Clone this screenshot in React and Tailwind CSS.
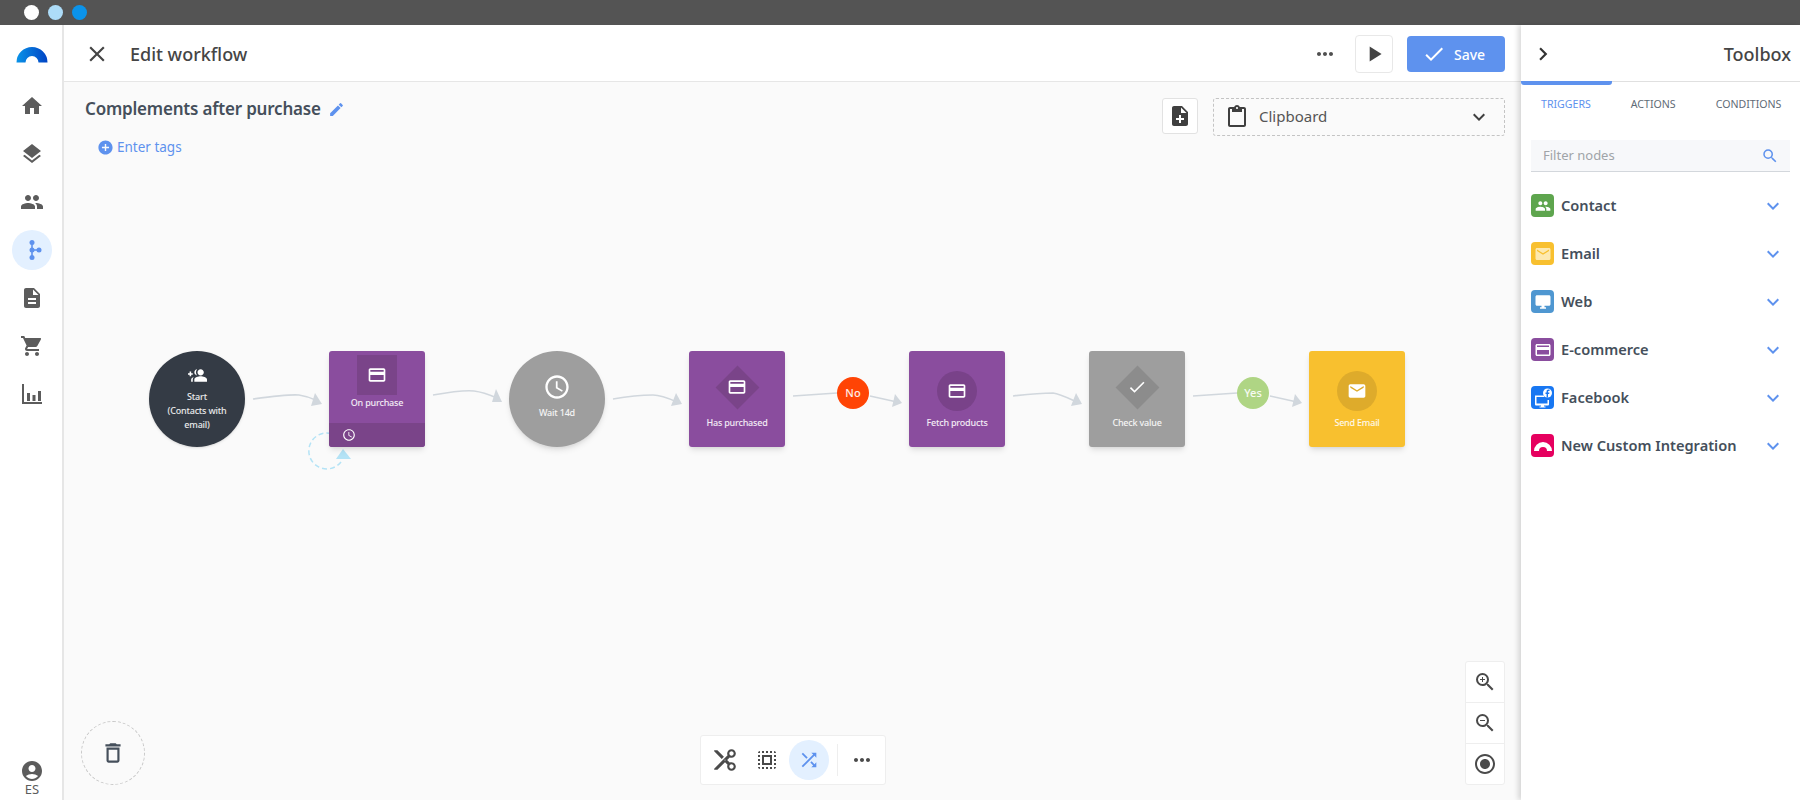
import React from "react";
import {
  MdHome, MdLayers, MdPeople, MdDescription, MdShoppingCart, MdAccountCircle, MdClose, MdPlayArrow,
  MdMoreHoriz, MdNoteAdd, MdContentPaste, MdExpandMore, MdChevronRight, MdSearch, MdCreditCard,
  MdEmail, MdDesktopWindows, MdAddCircle, MdEdit, MdGroupAdd, MdAccessTime, MdDeleteOutline,
  MdZoomIn, MdZoomOut, MdRadioButtonChecked, MdShuffle, MdContentCut, MdSelectAll, MdCheck,
} from "react-icons/md";

const Logo = () => (
  <svg width="32" height="17" viewBox="0 0 32 17">
    <defs>
      <linearGradient id="logoGrad" x1="0" y1="0" x2="1" y2="0">
        <stop offset="0" stopColor="#0a93e8" />
        <stop offset="1" stopColor="#0043c4" />
      </linearGradient>
    </defs>
    <path d="M0.5 16.5a15.5 15.5 0 0 1 31 0h-9a6.5 6.5 0 0 0-13 0z" fill="url(#logoGrad)" />
  </svg>
);

const FlowIcon = () => (
  <svg width="24" height="24" viewBox="0 0 24 24" fill="#5e92ee" stroke="#5e92ee">
    <path d="M12 4v16M12 12h8" strokeWidth="1.6" fill="none" />
    <circle cx="12" cy="4.5" r="2.5" stroke="none" />
    <circle cx="12" cy="12" r="2.5" stroke="none" />
    <circle cx="19" cy="12" r="2.5" stroke="none" />
    <circle cx="12" cy="19.5" r="2.5" stroke="none" />
  </svg>
);

const ChartIcon = () => (
  <svg width="24" height="24" viewBox="0 0 24 24" fill="#5c5c5c">
    <path d="M2 2h2v18h18v2H2z" />
    <path d="M7 11h3v8H7zM12.5 13h3v6h-3zM18 9h3v10h-3z" />
  </svg>
);

const sideItems = [MdHome, MdLayers, MdPeople];
const sideItemsBelow = [MdDescription, MdShoppingCart];

const Sidebar = () => (
  <aside className="w-[64px] shrink-0 flex flex-col items-center pl-[2px] border-r-2 border-[#e6e6e6] bg-white">
    <div className="mt-[21px] mb-[31px] h-[17px] flex"><Logo /></div>
    <div className="flex flex-col items-center gap-[24px] text-[#5c5c5c]">
      {sideItems.map((Icon, i) => (
        <Icon key={i} size={24} />
      ))}
    </div>
    <div className="mt-[16px] w-10 h-10 rounded-full bg-[#e3f0ff] flex items-center justify-center">
      <FlowIcon />
    </div>
    <div className="mt-[16px] flex flex-col items-center gap-[24px] text-[#5c5c5c]">
      {sideItemsBelow.map((Icon, i) => (
        <Icon key={i} size={24} />
      ))}
      <ChartIcon />
    </div>
    <div className="mt-auto mb-[4px] flex flex-col items-center text-[#5c5c5c]">
      <MdAccountCircle size={24} />
      <span className="text-[13px] leading-[14px] -mt-[1px]">ES</span>
    </div>
  </aside>
);

const Header = () => (
  <header className="h-[57px] shrink-0 bg-white border-b border-[#e6e6e6] flex items-center pt-[2px] pl-[20px] pr-[16px]">
    <MdClose size={26} className="text-[#444]" />
    <h1 className="ml-[20px] text-[18px] font-medium text-[#454545]">Edit workflow</h1>
    <MdMoreHoriz size={24} className="ml-auto text-[#505050]" />
    <button className="ml-[18px] w-[38px] h-[38px] rounded-[4px] border border-[#e8e8e8] bg-white flex items-center justify-center text-[#444]">
      <MdPlayArrow size={26} />
    </button>
    <button className="ml-[14px] w-[98px] h-[36px] rounded-[4px] bg-[#5e92ee] flex items-center pl-[15px] gap-[8px] text-white text-[14px] font-medium">
      <MdCheck size={24} />
      Save
    </button>
  </header>
);

const Edges = () => {
  const arrows = [
    ["M253 399C275 396 290 394 299 395C306 396 312 398 318 401", "322,404 315,393 311,406"],
    ["M433 395C450 392 465 390 474 391C482 392 490 395 497 398", "502,402 496,389 492,402"],
    ["M613 399C630 396 645 395 653 395C660 395 668 398 677 402", "682,404 676,393 671,406"],
    ["M793 396L837 393M870 396L897 402", "902,403 895,394 892,407"],
    ["M1013 396C1030 394 1045 393 1053 393C1060 394 1068 398 1077 402", "1082,404 1076,393 1071,406"],
    ["M1193 396L1237 393M1270 396L1297 402", "1302,403 1295,394 1292,407"],
  ];
  return (
    <svg className="absolute inset-0 w-full h-full" viewBox="64 82 1457 718" preserveAspectRatio="xMinYMin meet">
      {arrows.map(([d, pts], i) => (
        <g key={i}>
          <path d={d} fill="none" stroke="#d1d7dd" strokeWidth="1.6" />
          <polygon points={pts} fill="#d1d7dd" />
        </g>
      ))}
      <path d="M341 462A18 18 0 1 1 333 434" fill="none" stroke="#b4e3f6" strokeWidth="1.5" strokeDasharray="5 3" />
      <polygon points="343,449 336,459 351,459" fill="#b4e3f6" />
    </svg>
  );
};

const Label = ({ children, className = "", size = "text-[9px] tracking-[-0.2px]" }) => (
  <span className={"leading-[14px] font-medium text-white/90 text-center " + size + " " + className}>{children}</span>
);

const Diamond = ({ color, children }) => (
  <div className="relative w-[44px] h-[44px] flex items-center justify-center">
    <div className={"absolute w-[31px] h-[31px] rotate-45 " + color} />
    <div className="relative text-white flex">{children}</div>
  </div>
);

const Dot = ({ color, children }) => (
  <div className={"w-10 h-10 rounded-full flex items-center justify-center text-white " + color}>{children}</div>
);

const Workflow = () => (
  <>
    <Edges />
    <div className="absolute left-[85px] top-[269px] w-24 h-24 rounded-full bg-[#343b45] shadow flex flex-col items-center pt-[15px] text-white">
      <MdGroupAdd size={19} className="-scale-x-100" />
      <Label className="mt-[5px] w-[70px] leading-[13.5px]">Start<br />(Contacts with<br />email)</Label>
    </div>

    <div className="absolute left-[265px] top-[269px] w-24 h-24 rounded-[3px] bg-[#8a4d9e] shadow-md flex flex-col items-center overflow-hidden">
      <div className="mt-[4px] w-10 h-10 bg-[#7a4489] flex items-center justify-center text-white">
        <MdCreditCard size={20} />
      </div>
      <Label className="mt-[1px]">On purchase</Label>
      <div className="mt-auto w-full h-6 bg-[#7a4489] flex items-center pl-[13px] text-white">
        <MdAccessTime size={14} />
      </div>
    </div>

    <div className="absolute left-[445px] top-[269px] w-24 h-24 rounded-full bg-[#9e9e9e] shadow-md flex flex-col items-center pt-[22px] text-white">
      <MdAccessTime size={28} />
      <Label className="mt-[5px]">Wait 14d</Label>
    </div>

    <div className="absolute left-[625px] top-[269px] w-24 h-24 rounded-[3px] bg-[#8a4d9e] shadow-md flex flex-col items-center pt-[14px]">
      <Diamond color="bg-[#7a4489]"><MdCreditCard size={20} /></Diamond>
      <Label className="mt-[7px]">Has purchased</Label>
    </div>

    <div className="absolute left-[773px] top-[295px] w-8 h-8 rounded-full bg-[#ff4405] flex items-center justify-center">
      <Label size="text-[11px]">No</Label>
    </div>

    <div className="absolute left-[845px] top-[269px] w-24 h-24 rounded-[3px] bg-[#8a4d9e] shadow-md flex flex-col items-center pt-[20px]">
      <Dot color="bg-[#794289]"><MdCreditCard size={20} /></Dot>
      <Label className="mt-[5px]">Fetch products</Label>
    </div>

    <div className="absolute left-[1025px] top-[269px] w-24 h-24 rounded-[3px] bg-[#9e9e9e] shadow-md flex flex-col items-center pt-[14px]">
      <Diamond color="bg-[#8c8c8c]"><MdCheck size={20} /></Diamond>
      <Label className="mt-[7px]">Check value</Label>
    </div>

    <div className="absolute left-[1173px] top-[295px] w-8 h-8 rounded-full bg-[#afd584] flex items-center justify-center">
      <Label size="text-[11px]">Yes</Label>
    </div>

    <div className="absolute left-[1245px] top-[269px] w-24 h-24 rounded-[3px] bg-[#f8c02f] shadow-md flex flex-col items-center pt-[20px]">
      <Dot color="bg-[#deab2b]"><MdEmail size={20} /></Dot>
      <Label className="mt-[5px]">Send Email</Label>
    </div>
  </>
);

const Canvas = () => (
  <div className="relative flex-1 bg-[#fafafa] overflow-hidden">
    <div className="relative z-10 flex justify-between pl-[21px] pr-[16px] pt-[16px]">
      <div className="-mt-[2px]">
        <div className="flex items-center gap-[7px]">
          <h2 className="text-[17px] tracking-[-0.2px] leading-[26px] font-semibold text-[#454f5b]">Complements after purchase</h2>
          <MdEdit size={17} className="text-[#5e92ee]" />
        </div>
        <div className="mt-[15px] ml-[12px] flex items-center gap-[3px] text-[#5e92ee] text-[13.5px]">
          <MdAddCircle size={17} />
          Enter tags
        </div>
      </div>
      <div className="flex gap-[15px]">
        <button className="w-[36px] h-[36px] rounded-[3px] border border-[#e2e2e2] bg-white flex items-center justify-center text-[#3f3f3f]">
          <MdNoteAdd size={24} />
        </button>
        <div className="w-[292px] h-[38px] rounded-[3px] border border-dashed border-[#c4c4c4] flex items-center pl-[11px] pr-[13px] text-[#555]">
          <MdContentPaste size={24} className="text-[#3f3f3f]" />
          <span className="ml-[10px] -mt-[2px] text-[15px]">Clipboard</span>
          <MdExpandMore size={24} className="ml-auto text-[#3f3f3f]" />
        </div>
      </div>
    </div>

    <Workflow />

    <div className="absolute left-[17px] bottom-[15px] w-[64px] h-[64px] rounded-full border border-dashed border-[#c8c8c8] flex items-center justify-center text-[#454f5b]">
      <MdDeleteOutline size={26} />
    </div>

    <div className="absolute left-[636px] bottom-[15px] h-[50px] w-[186px] rounded-[3px] border border-[#eeeeee] bg-white flex items-center text-[#4a4a4a]">
      <MdContentCut size={26} className="ml-[11px] -scale-x-100" />
      <MdSelectAll size={24} className="ml-[17px]" />
      <div className="ml-[10px] w-10 h-10 rounded-full bg-[#e3f0ff] flex items-center justify-center text-[#5e92ee]">
        <MdShuffle size={22} />
      </div>
      <div className="ml-[8px] w-px h-8 bg-[#eeeeee]" />
      <MdMoreHoriz size={24} className="ml-[12px]" />
    </div>

    <div className="absolute right-[16px] bottom-[15px] w-[40px] rounded-[3px] border border-[#eeeeee] bg-white flex flex-col text-[#4a4a4a]">
      <div className="h-[41px] flex items-center justify-center border-b border-[#eeeeee]"><MdZoomIn size={24} /></div>
      <div className="h-[41px] flex items-center justify-center border-b border-[#eeeeee]"><MdZoomOut size={24} /></div>
      <div className="h-[40px] flex items-center justify-center"><MdRadioButtonChecked size={24} /></div>
    </div>
  </div>
);

const FacebookIcon = () => (
  <svg width="20" height="20" viewBox="0 0 20 20">
    <path d="M2 7.5h9v1.5H3.5v6.5h11V12H16v4.5a1 1 0 0 1-1 1h-4v1h1.5v1h-6v-1H8v-1H3a1 1 0 0 1-1-1z" fill="#fff" />
    <circle cx="14.5" cy="5" r="4.5" fill="#fff" />
    <path d="M15 9.4V6h1.2l.2-1.4H15v-1c0-.4.2-.7.7-.7h.8V1.6h-1c-1.2 0-1.9.7-1.9 1.9v1.1h-1.1V6h1.1v3.4z" fill="#1877f2" />
  </svg>
);
const CustomIcon = () => (
  <svg width="20" height="12" viewBox="0 0 20 12">
    <path d="M1 11a9 9 0 0 1 18 0h-5a4 4 0 0 0-8 0z" fill="#fff" />
  </svg>
);

const nodeGroups = [
  { name: "Contact", color: "bg-[#5ea54e]", icon: <MdPeople size={16} className="text-white" /> },
  { name: "Email", color: "bg-[#f8c02f]", icon: <MdEmail size={18} className="text-[#fde9b0]" /> },
  { name: "Web", color: "bg-[#4f97d1]", icon: <MdDesktopWindows size={18} className="text-white" /> },
  { name: "E-commerce", color: "bg-[#8a4d9e]", icon: <MdCreditCard size={18} className="text-white" /> },
  { name: "Facebook", color: "bg-[#1877f2]", icon: <FacebookIcon /> },
  { name: "New Custom Integration", color: "bg-[#e6005f]", icon: <CustomIcon /> },
];

const Toolbox = () => (
  <aside className="relative z-20 w-[279px] shrink-0 bg-white shadow-[-3px_0_5px_rgba(0,0,0,0.14)] flex flex-col">
    <div className="h-[57px] shrink-0 border-b border-[#e0e0e0] flex items-center justify-between pt-[2px] pl-[9px] pr-[9px]">
      <MdChevronRight size={26} className="text-[#333]" />
      <span className="text-[18px] font-medium text-[#454545]">Toolbox</span>
    </div>
    <div className="w-[91px] h-[4px] -mt-px rounded-b-[3px] bg-[#5e92ee] relative" />
    <div className="flex text-[10.6px] mt-[10px] leading-[18px] whitespace-nowrap text-[#5f6b76]">
      <span className="px-5 text-[#5e92ee]">TRIGGERS</span>
      <span className="px-5">ACTIONS</span>
      <span className="px-5">CONDITIONS</span>
    </div>
    <div className="mx-[10px] mt-[27px] h-[32px] shrink-0 bg-[#f7f8fa] border-b border-[#d3d7dc] flex items-center justify-between pl-[12px] pr-[11px]">
      <span className="text-[13px] text-[#a0a4a8]">Filter nodes</span>
      <MdSearch size={18} className="text-[#5e92ee]" />
    </div>
    <div className="mt-[22px] flex flex-col gap-[25px] pl-[10px] pr-[15px]">
      {nodeGroups.map((group) => (
        <div key={group.name} className="h-[23px] flex items-center">
          <div className={"w-[23px] h-[23px] rounded-[4px] flex items-center justify-center " + group.color}>{group.icon}</div>
          <span className="ml-[7px] text-[14.6px] font-semibold text-[#454f5b]">{group.name}</span>
          <MdExpandMore size={24} className="ml-auto text-[#5e92ee]" />
        </div>
      ))}
    </div>
  </aside>
);

export default function App() {
  return (
    <div className="w-[1800px] h-[800px] flex flex-col overflow-hidden bg-white font-['Noto_Sans',sans-serif]">
      <div className="h-[25px] shrink-0 bg-[#545454] flex items-center gap-[9px] pl-[24px]">
        <span className="w-[15px] h-[15px] rounded-full bg-white" />
        <span className="w-[15px] h-[15px] rounded-full bg-[#addcf8]" />
        <span className="w-[15px] h-[15px] rounded-full bg-[#0b93ea]" />
      </div>
      <div className="flex-1 flex min-h-0">
        <Sidebar />
        <main className="flex-1 flex flex-col min-w-0">
          <Header />
          <Canvas />
        </main>
        <Toolbox />
      </div>
    </div>
  );
}
